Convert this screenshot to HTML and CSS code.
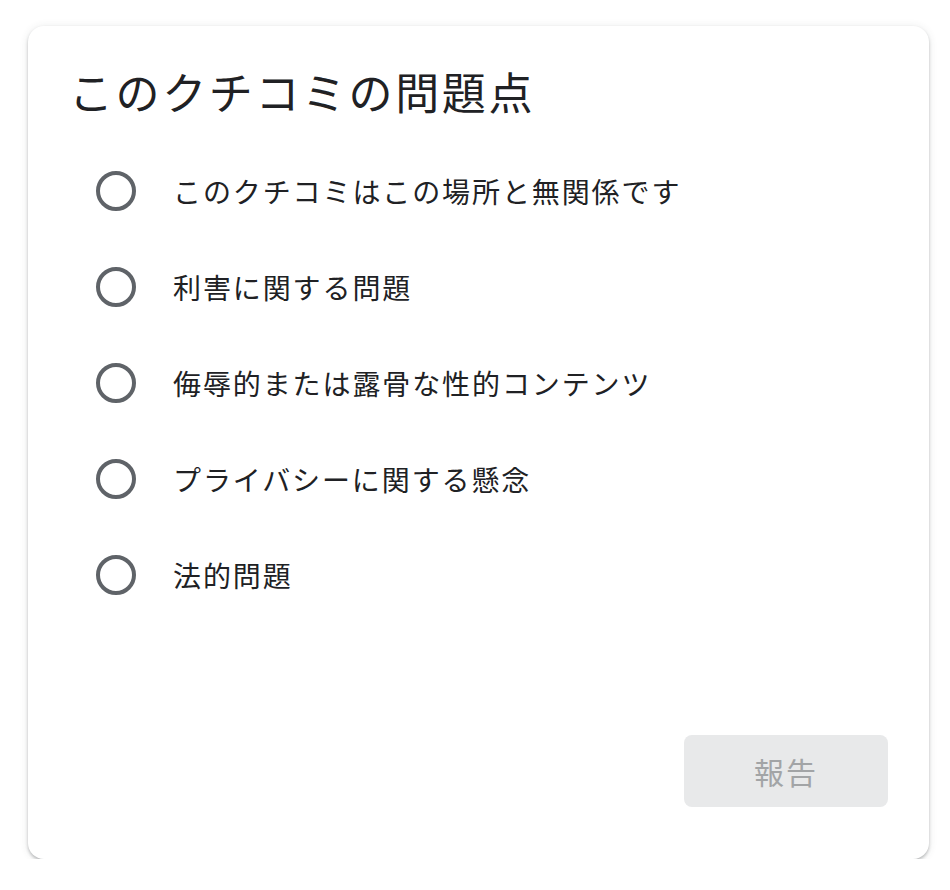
FILE: index.html
```html
<!DOCTYPE html>
<html lang="ja">
<head>
    <meta charset="UTF-8">
    <meta name="viewport" content="width=device-width, initial-scale=1.0">
    <title>クチコミを報告</title>
    <link rel="stylesheet" href="styles.css">
</head>
<body>
    <div class="dialog">
        <h1>このクチコミの問題点</h1>
        <form class="options">
            <label class="option">
                <input type="radio" name="reason">
                <span class="radio"></span>
                <span class="label-text">このクチコミはこの場所と無関係です</span>
            </label>
            <label class="option">
                <input type="radio" name="reason">
                <span class="radio"></span>
                <span class="label-text">利害に関する問題</span>
            </label>
            <label class="option">
                <input type="radio" name="reason">
                <span class="radio"></span>
                <span class="label-text">侮辱的または露骨な性的コンテンツ</span>
            </label>
            <label class="option">
                <input type="radio" name="reason">
                <span class="radio"></span>
                <span class="label-text">プライバシーに関する懸念</span>
            </label>
            <label class="option">
                <input type="radio" name="reason">
                <span class="radio"></span>
                <span class="label-text">法的問題</span>
            </label>
        </form>
        <div class="actions">
            <button class="report-button" disabled>報告</button>
        </div>
    </div>
</body>
</html>
```

FILE: styles.css
```css
* {
    margin: 0;
    padding: 0;
    box-sizing: border-box;
}
body {
    font-family: "Noto Sans CJK JP", "Noto Sans", sans-serif;
    background-color: #ffffff;
    color: #202124;
}
.dialog {
    width: 901px;
    margin: 26px 0 0 28px;
    padding: 37px 41px 52px 41px;
    background-color: white;
    border-radius: 16px;
    box-shadow: 0 2px 3px rgba(60, 64, 67, 0.3), 0 1px 8px rgba(60, 64, 67, 0.12);
}
h1 {
    font-size: 44px;
    font-weight: 400;
    line-height: 56px;
    letter-spacing: 2.6px;
    margin-bottom: 24px;
}
.options {
    display: flex;
    flex-direction: column;
    padding-left: 27px;
}
.option {
    display: flex;
    align-items: center;
    gap: 37px;
    height: 96px;
    cursor: pointer;
}
.option input {
    display: none;
}
.radio {
    width: 40px;
    height: 40px;
    border: 4px solid #5f6368;
    border-radius: 50%;
    flex-shrink: 0;
}
.label-text {
    font-size: 28px;
    letter-spacing: 1.9px;
    line-height: 40px;
}
.actions {
    display: flex;
    justify-content: flex-end;
    margin-top: 112px;
}
.report-button {
    width: 204px;
    height: 72px;
    border: none;
    border-radius: 8px;
    background-color: #e8e9ea;
    color: #a2a4a6;
    font-family: inherit;
    font-size: 30px;
    letter-spacing: 2px;
}
```
